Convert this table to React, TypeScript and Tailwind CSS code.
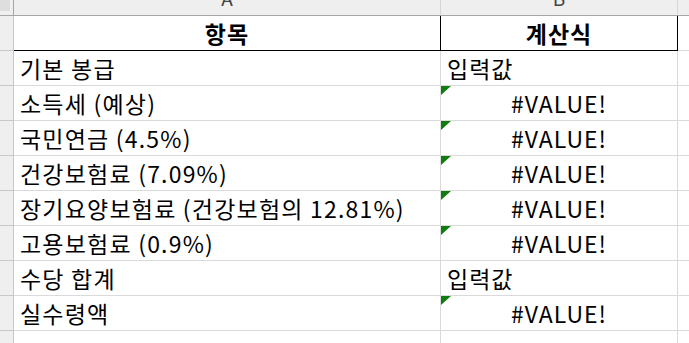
import React from 'react';

interface Row {
    label: string;
    value: string;
    error?: boolean;
}

const rows: Row[] = [
    { label: "기본 봉급", value: "입력값" },
    { label: "소득세 (예상)", value: "#VALUE!", error: true },
    { label: "국민연금 (4.5%)", value: "#VALUE!", error: true },
    { label: "건강보험료 (7.09%)", value: "#VALUE!", error: true },
    { label: "장기요양보험료 (건강보험의 12.81%)", value: "#VALUE!", error: true },
    { label: "고용보험료 (0.9%)", value: "#VALUE!", error: true },
    { label: "수당 합계", value: "입력값" },
    { label: "실수령액", value: "#VALUE!", error: true },
];

// little green flag Excel puts in the corner of a cell with a warning
const ErrorFlag = () => (
    <svg className="absolute left-0 top-0" width="10" height="9" viewBox="0 0 10 9">
        <polygon points="0,0 10,0 0,9" fill="#107c10" />
    </svg>
);

export default function App() {
    return (
        <div
            className="w-[689px] h-[343px] overflow-hidden bg-white text-black"
            style={{ fontFamily: '"Noto Sans CJK KR", "Noto Sans", sans-serif' }}
        >
            {/* column letters */}
            <div className="flex h-[16px] bg-[#efefef] border-b border-[#a6a6a6]">
                <div className="w-[14px] shrink-0 border-r border-[#a6a6a6] flex">
                    <div className="w-[10px] h-[11px] bg-[#dedede]" />
                </div>
                <div className="w-[427px] shrink-0 border-r border-[#d6d6d6] overflow-hidden flex justify-center">
                    <span className="text-[19px] leading-[20px] -mt-[12px] text-[#444]">A</span>
                </div>
                <div className="w-[237px] shrink-0 border-r border-[#d6d6d6] overflow-hidden flex justify-center">
                    <span className="text-[19px] leading-[20px] -mt-[12px] text-[#444]">B</span>
                </div>
                <div className="flex-1" />
            </div>

            {/* header row */}
            <div className="flex h-[35px]">
                <div className="w-[14px] shrink-0 bg-[#efefef] border-r border-b border-[#c8c8c8]" />
                <div className="w-[427px] shrink-0 border-r border-b border-black flex items-center justify-center text-[23px] tracking-[1px] font-bold">
                    항목
                </div>
                <div className="w-[237px] shrink-0 border-r border-b border-black flex items-center justify-center text-[23px] tracking-[1px] font-bold">
                    계산식
                </div>
                <div className="flex-1 border-b border-[#dadada]" />
            </div>

            {rows.map((row, i) => (
                <div key={i} className="flex h-[35px]">
                    <div className="w-[14px] shrink-0 bg-[#efefef] border-r border-b border-[#c8c8c8]" />
                    <div className="w-[427px] shrink-0 border-r border-b border-[#dadada] flex items-center pl-[6px] text-[23px] tracking-[1.2px] whitespace-nowrap">
                        {row.label}
                    </div>
                    <div
                        className={
                            "relative w-[237px] shrink-0 border-r border-b border-[#dadada] flex items-center text-[23px] tracking-[1px] whitespace-nowrap " +
                            (row.error ? "justify-center" : "pl-[6px]")
                        }
                    >
                        {row.error && <ErrorFlag />}
                        {row.value}
                    </div>
                    <div className="flex-1 border-b border-[#dadada]" />
                </div>
            ))}

            <div className="flex h-[20px]">
                <div className="w-[14px] shrink-0 bg-[#efefef] border-r border-[#c8c8c8]" />
                <div className="w-[427px] shrink-0 border-r border-[#dadada]" />
                <div className="w-[237px] shrink-0 border-r border-[#dadada]" />
                <div className="flex-1" />
            </div>
        </div>
    );
}
